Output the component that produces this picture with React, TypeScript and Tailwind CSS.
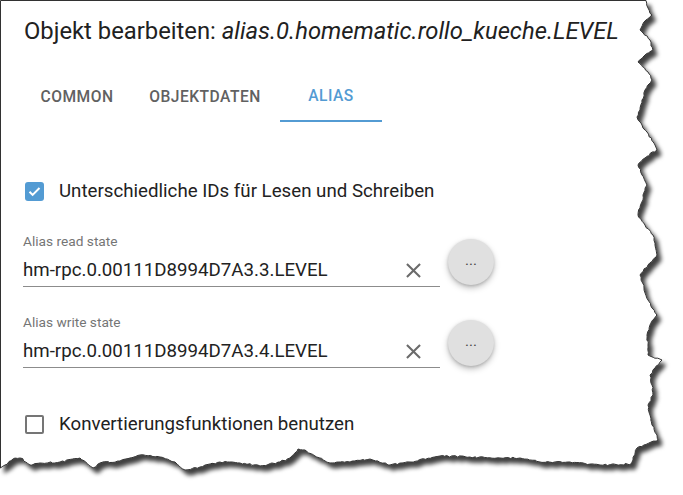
import React from "react";

// torn paper outline: right edge top→bottom, then bottom edge right→left
const rightEdge: [number, number][] = [
  [646, 0], [648, 8], [652, 15], [644, 22], [640, 30], [650, 40], [653, 50], [645, 55],
  [638, 62], [648, 72], [652, 80], [645, 90], [642, 100], [640, 110], [637, 117], [642, 125],
  [647, 132], [655, 145], [657, 150], [645, 158], [638, 165], [642, 175], [647, 185], [643, 195],
  [643, 200], [640, 208], [638, 215], [645, 225], [653, 235], [655, 245], [657, 255], [648, 265],
  [640, 275], [644, 288], [648, 300], [652, 308], [657, 315], [650, 325], [647, 335], [648, 345],
  [648, 355], [662, 360], [655, 368], [650, 375], [652, 385], [653, 395], [648, 405], [650, 415],
  [652, 425], [657, 435], [658, 440], [637, 448], [633, 460], [631, 464],
];

const bottomEdge: [number, number][] = [
  [600, 465], [570, 462], [540, 462], [520, 458], [500, 458], [470, 457], [440, 456], [410, 462],
  [390, 465], [370, 459], [350, 462], [330, 463], [315, 456], [305, 450], [298, 449], [290, 458],
  [280, 462], [260, 466], [240, 463], [220, 462], [200, 467], [185, 470], [175, 462], [160, 457],
  [140, 455], [120, 461], [100, 463], [93, 468], [80, 458], [60, 462], [40, 463], [30, 465],
  [20, 458], [13, 459], [5, 465], [0.5, 468],
];

function jag(points: [number, number][]) {
  const out: string[] = [];
  let seed = 7;
  const rnd = () => {
    seed = (seed * 9301 + 49297) % 233280;
    return seed / 233280 - 0.5;
  };
  for (let i = 0; i < points.length - 1; i++) {
    const [x1, y1] = points[i];
    const [x2, y2] = points[i + 1];
    const len = Math.hypot(x2 - x1, y2 - y1);
    const steps = Math.max(1, Math.round(len / 2.5));
    for (let s = 0; s < steps; s++) {
      const t = s / steps;
      const x = x1 + (x2 - x1) * t + (s ? rnd() * 1.6 : 0);
      const y = y1 + (y2 - y1) * t + (s ? rnd() * 1.6 : 0);
      out.push(`${x.toFixed(1)},${y.toFixed(1)}`);
    }
  }
  const last = points[points.length - 1];
  out.push(`${last[0]},${last[1]}`);
  return out;
}

const paperPath =
  "M0.5,0.5 " + jag([[646, 0.5], ...rightEdge.slice(1), ...bottomEdge]).map((p) => "L" + p).join(" ") + " Z";

const TornPaper = () => (
  <svg className="absolute inset-0" width={683} height={495} viewBox="0 0 683 495">
    <defs>
      <filter id="torn-shadow" x="-5%" y="-5%" width="115%" height="115%">
        <feDropShadow dx="4" dy="5" stdDeviation="2.2" floodColor="#000" floodOpacity="0.75" />
      </filter>
    </defs>
    <path d={paperPath} fill="#fff" stroke="#333" strokeWidth={1} filter="url(#torn-shadow)" />
  </svg>
);

const CloseIcon = () => (
  <svg width="25" height="25" viewBox="0 0 24 24" fill="#6b6b6b">
    <path d="M19 6.41L17.59 5 12 10.59 6.41 5 5 6.41 10.59 12 5 17.59 6.41 19 12 13.41 17.59 19 19 17.59 13.41 12z" />
  </svg>
);

const StateField = ({ label, value }: { label: string; value: string }) => (
  <div className="flex items-start gap-2 pl-[23px]">
    <div className="w-[417px]">
      <div className="text-[13.7px] leading-[16px] text-[#757575]">{label}</div>
      <div className="mt-[6px] h-[32px] flex items-center justify-between border-b border-[#8c8c8c] pr-[14px]">
        <span className="text-[18.7px] text-[#222]">{value}</span>
        <CloseIcon />
      </div>
    </div>
    <button className="mt-[6px] w-[46px] h-[46px] rounded-full bg-[#e0e0e0] shadow-[0_3px_6px_rgba(0,0,0,0.25),0_1px_3px_rgba(0,0,0,0.15)] flex items-center justify-center text-[15px] leading-none text-[#444] pb-[4px]">
      ...
    </button>
  </div>
);

export default function App() {
  return (
    <div className="relative w-[683px] h-[495px] bg-white overflow-hidden font-['Roboto',sans-serif]">
      <TornPaper />
      <div className="relative">
        <div className="h-[64px] flex items-center pl-6 text-[23.8px] text-[#212121] whitespace-nowrap">
          <span>Objekt bearbeiten:&nbsp;</span>
          <span className="italic">alias.0.homematic.rollo_kueche.LEVEL</span>
        </div>

        <div className="mt-[10px] flex pl-6 h-[48px] text-[15.6px] font-medium tracking-[0.5px] uppercase">
          <div className="w-[106px] flex items-center justify-center text-[#616161]">Common</div>
          <div className="w-[150px] flex items-center justify-center text-[#616161]">Objektdaten</div>
          <div className="w-[102px] flex items-center justify-center text-[#539bd3] border-b-2 border-[#539bd3]">
            Alias
          </div>
        </div>

        <div className="mt-[48px] h-[42px] flex items-center pl-[25px] gap-[15px]">
          <span className="w-[19px] h-[19px] rounded-[3px] bg-[#539bd3] flex items-center justify-center">
            <svg width="15" height="15" viewBox="0 0 24 24" fill="none" stroke="#fff" strokeWidth={3.2}>
              <path d="M4 12.5l5 5L20 6.5" />
            </svg>
          </span>
          <span className="text-[18.7px] text-[#222]">Unterschiedliche IDs für Lesen und Schreiben</span>
        </div>

        <div className="mt-[21px] flex flex-col gap-[27px]">
          <StateField label="Alias read state" value="hm-rpc.0.00111D8994D7A3.3.LEVEL" />
          <StateField label="Alias write state" value="hm-rpc.0.00111D8994D7A3.4.LEVEL" />
        </div>

        <div className="mt-[35px] h-[42px] flex items-center pl-[25px] gap-[15px]">
          <span className="w-[19px] h-[19px] rounded-[2px] border-2 border-[#757575]" />
          <span className="text-[18.7px] text-[#222]">Konvertierungsfunktionen benutzen</span>
        </div>
      </div>
    </div>
  );
}
